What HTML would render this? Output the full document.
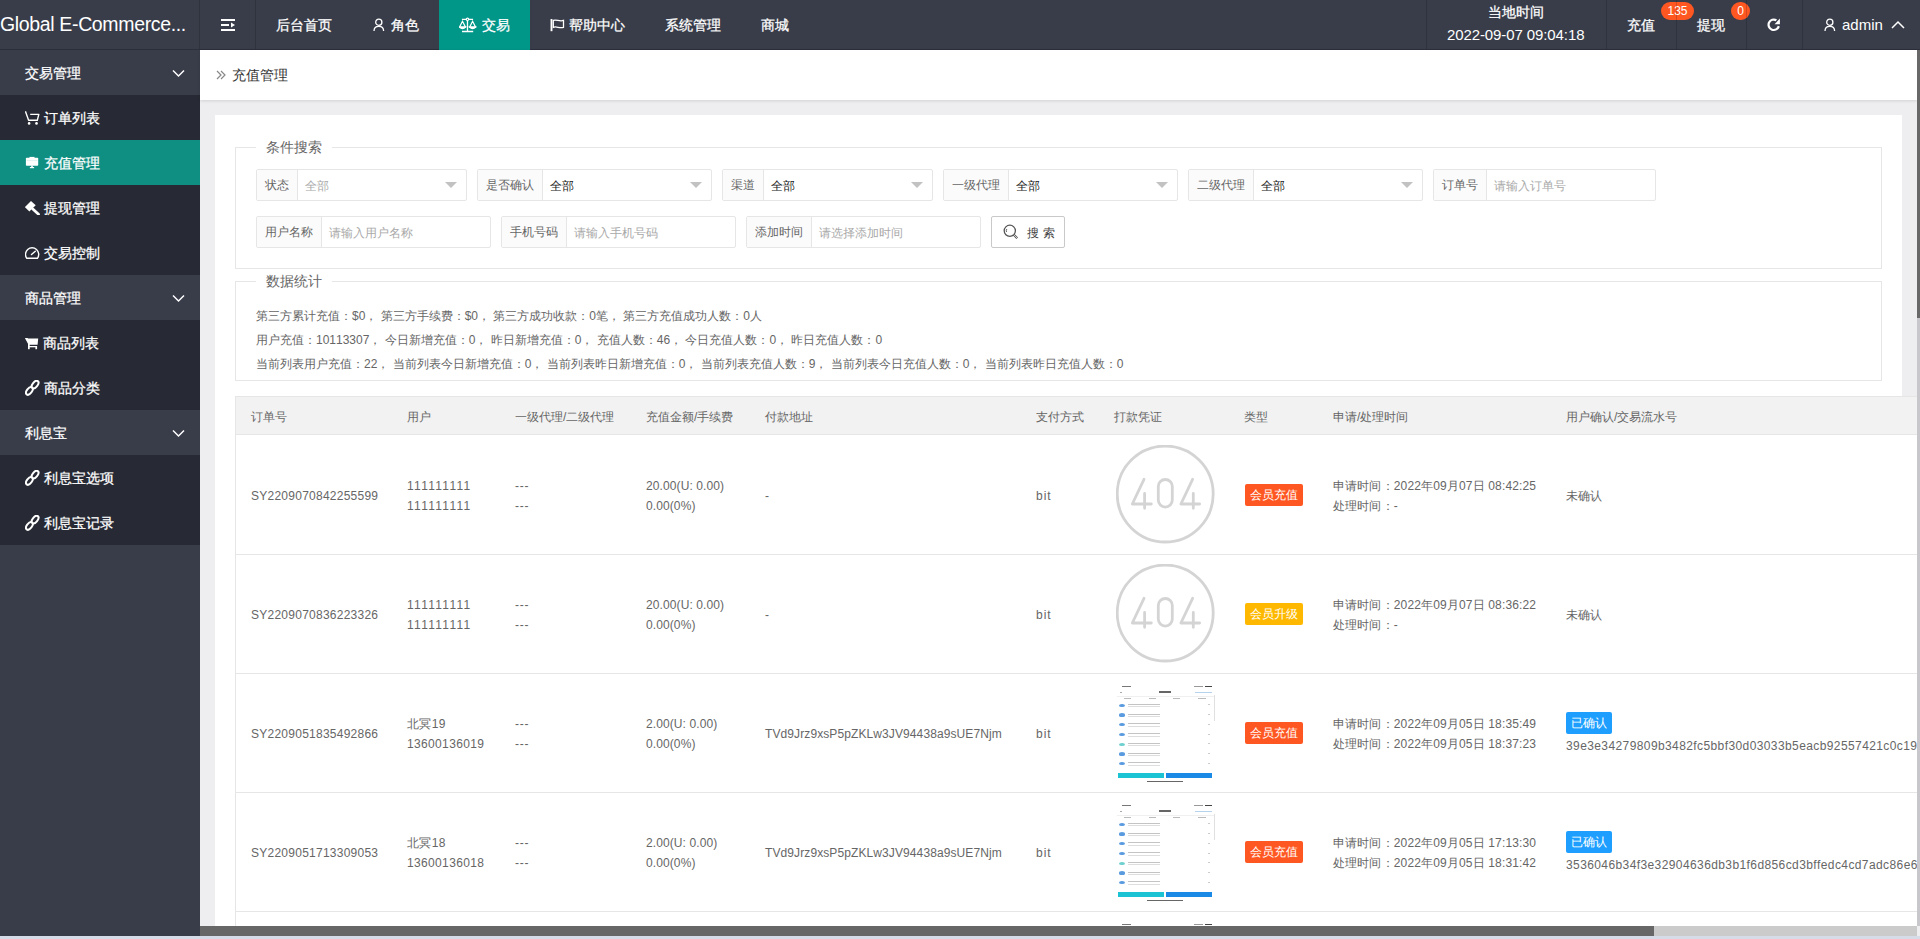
<!DOCTYPE html>
<html><head><meta charset="utf-8">
<style>
*{box-sizing:border-box;margin:0;padding:0}
html,body{width:1920px;height:939px;overflow:hidden;background:#eeedf0;font-kerning:none;font-family:"Liberation Sans",sans-serif;color:#666}
.abs{position:absolute}
#hdr{position:absolute;left:0;top:0;width:1920px;height:50px;background:#393d4a;border-bottom:1px solid #2c2f3a}
.ht{position:absolute;color:#fff;font-size:14px;line-height:16px;white-space:nowrap;-webkit-text-stroke:0.25px #fff}
.vsep{position:absolute;top:0;width:1px;height:49px;background:rgba(0,0,0,0.16)}
#side{position:absolute;left:0;top:50px;width:200px;height:889px;background:#393d4a}
.grp{position:absolute;left:0;width:200px;height:45px;background:#393d4a;color:#fff;font-size:14px}
.itm{position:absolute;left:0;width:200px;height:45px;background:#272a34;color:#fff;font-size:14px}
.itm.on{background:#0f8f82}
.grp span,.itm span{position:absolute;top:15px;line-height:16px;white-space:nowrap;-webkit-text-stroke:0.25px #fff}
.chev{position:absolute;left:172px;top:19px}
.ico{position:absolute;left:25px;top:15px}
#crumb{position:absolute;left:200px;top:50px;width:1717px;height:50px;background:#fff;box-shadow:0 1px 3px rgba(0,0,0,.12)}
#card{position:absolute;left:215px;top:115px;width:1687px;height:830px;background:#fff}
.fs{position:absolute;left:235px;width:1647px;border:1px solid #e6e6e6}
.lg{position:absolute;left:256px;background:#fff;padding:0 10px;font-size:14px;line-height:16px;color:#666}
.box{position:absolute;height:32px;border:1px solid #e6e6e6;background:#fff;border-radius:2px}
.box .lb{position:absolute;left:0;top:0;height:30px;background:#fbfbfb;border-right:1px solid #e6e6e6;font-size:12px;line-height:30px;padding:0 8px;color:#666;white-space:nowrap}
.box .v{position:absolute;top:1px;line-height:30px;font-size:12px;white-space:nowrap}
.box .ph{color:#a9a9a9}
.box .val{color:#222}
.box .arr{position:absolute;top:12px;width:0;height:0;border-left:6px solid transparent;border-right:6px solid transparent;border-top:6px solid #c2c2c2}
.stat{position:absolute;left:256px;font-size:12px;line-height:24px;color:#666;white-space:nowrap}
#tbl{position:absolute;left:235px;top:396px;width:1682px;height:530px;border-left:1px solid #e6e6e6;overflow:hidden;background:#fff}
.th{position:absolute;left:0;top:0;width:1700px;height:39px;background:#f2f2f2;border-top:1px solid #e6e6e6;border-bottom:1px solid #e6e6e6}
.c{position:absolute;font-size:12px;line-height:20px;color:#666;white-space:nowrap}
.rowb{position:absolute;left:0;width:1700px;height:1px;background:#e6e6e6}
.tag{position:absolute;height:22px;line-height:22px;font-size:12px;color:#fff;text-align:center;border-radius:2px}
.c404{position:absolute;width:100px;height:100px}
.c404 b{position:absolute;left:0;top:0;width:94px;height:94px;text-align:center;line-height:94px;font-weight:normal;font-size:44px;color:#d2d2d2;letter-spacing:1px}
#hs{position:absolute;left:200px;top:926px;width:1717px;height:10px;background:#cbcbcb}
#hs i{position:absolute;left:0;top:0;width:1454px;height:10px;background:#676767}
#vs{position:absolute;left:1917px;top:50px;width:3px;height:876px;background:#c8c8cc}
#vs i{position:absolute;left:0;top:0;width:3px;height:268px;background:#686868}
.shot{position:absolute;width:98px;height:99px;background:#fff}
.shot i{position:absolute;display:block}
#task{position:absolute;left:0;top:936px;width:1920px;height:3px;background:#d6dde9}
</style></head><body>

<div id="hdr">
  <div class="ht" style="left:0;top:11.5px;font-size:19.5px;line-height:24px;letter-spacing:-0.35px;-webkit-text-stroke:0">Global E-Commerce...</div>
  <div class="vsep" style="left:199px"></div>
  <svg class="abs" style="left:221px;top:19px" width="15" height="12" viewBox="0 0 15 12"><rect x="0" y="0" width="14" height="2" fill="#fff"/><rect x="0" y="5" width="8" height="2" fill="#fff"/><path d="M10 3.5 L14 6 L10 8.5Z" fill="#fff"/><rect x="0" y="10" width="14" height="2" fill="#fff"/></svg>
  <div class="vsep" style="left:255px"></div>
  <div class="ht" style="left:276px;top:17px">后台首页</div>
  <svg class="abs" style="left:373px;top:18px" width="13" height="14" viewBox="0 0 13 14" fill="none" stroke="#fff" stroke-width="1.3"><circle cx="5.8" cy="4.2" r="3.1"/><path d="M1 13 C1 10 3.2 8.4 5.8 8.4 C8.4 8.4 10.6 10 10.6 13"/></svg>
  <div class="ht" style="left:391px;top:17px">角色</div>
  <div class="abs" style="left:439px;top:0;width:91px;height:50px;background:#009688"></div>
  <svg class="abs" style="left:459px;top:17px" width="18" height="16" viewBox="0 0 18 16" fill="none" stroke="#fff" stroke-width="1.2"><path d="M2.9 2.3 H14.1 M8.5 2.3 V14.5 M3 14.5 H14.2" stroke-width="1.3"/><circle cx="8.5" cy="2.3" r="1.2" fill="#009688"/><path d="M3.5 4.3 L0.6 10 H6.4 Z M13.6 4.3 L10.7 10 H16.5 Z"/><path d="M0.4 10 Q3.5 13.2 6.6 10 Z M10.5 10 Q13.6 13.2 16.7 10 Z" fill="#fff"/></svg>
  <div class="ht" style="left:482px;top:17px">交易</div>
  <svg class="abs" style="left:550px;top:18px" width="15" height="14" viewBox="0 0 15 14" fill="none" stroke="#fff" stroke-width="1.3"><path d="M1.5 1 V13.2" stroke-width="1.9"/><path d="M3.3 2.4 C6.5 1 9.5 4 13.5 2.4 V9.3 C9.5 10.8 6.5 7.8 3.3 9.3 Z"/></svg>
  <div class="ht" style="left:569px;top:17px">帮助中心</div>
  <div class="ht" style="left:665px;top:17px">系统管理</div>
  <div class="ht" style="left:761px;top:17px">商城</div>

  <div class="vsep" style="left:1426px"></div>
  <div class="ht" style="left:1488px;top:4px">当地时间</div>
  <div class="ht" style="left:1447px;top:26px;font-size:15px;line-height:18px;letter-spacing:-0.1px;-webkit-text-stroke:0">2022-09-07 09:04:18</div>
  <div class="vsep" style="left:1606px"></div>
  <div class="ht" style="left:1627px;top:17px">充值</div>
  <div class="abs" style="left:1661px;top:2px;width:33px;height:18px;border-radius:9px;background:#ff5722;color:#fff;font-size:12px;line-height:18px;text-align:center">135</div>
  <div class="vsep" style="left:1676px"></div>
  <div class="ht" style="left:1697px;top:17px">提现</div>
  <div class="abs" style="left:1731px;top:2px;width:19px;height:18px;border-radius:9px;background:#ff5722;color:#fff;font-size:12px;line-height:18px;text-align:center">0</div>
  <div class="vsep" style="left:1746px"></div>
  <svg class="abs" style="left:1767px;top:18px" width="15" height="15" viewBox="0 0 15 15"><path d="M11.8 8.1 A5.2 5.2 0 1 1 9.4 2.3" fill="none" stroke="#fff" stroke-width="2.2"/><path d="M12.9 0.6 V6.2 H7.6 Z" fill="#fff"/></svg>
  <div class="vsep" style="left:1802px"></div>
  <svg class="abs" style="left:1824px;top:18px" width="13" height="14" viewBox="0 0 13 14" fill="none" stroke="#fff" stroke-width="1.3"><circle cx="5.8" cy="4.2" r="3.1"/><path d="M1 13 C1 10 3.2 8.4 5.8 8.4 C8.4 8.4 10.6 10 10.6 13"/></svg>
  <div class="ht" style="left:1842px;top:16px;font-size:15px;line-height:18px;-webkit-text-stroke:0">admin</div>
  <svg class="abs" style="left:1891px;top:20px" width="14" height="9" viewBox="0 0 14 9" fill="none" stroke="#fff" stroke-width="1.5"><path d="M1 8 L7 2 L13 8"/></svg>
</div>

<div id="side">
  <div class="grp" style="top:0"><span style="left:25px">交易管理</span><svg class="chev" width="13" height="9" viewBox="0 0 13 9" fill="none" stroke="#fff" stroke-width="1.5"><path d="M1 1.5 L6.5 7 L12 1.5"/></svg></div>
  <div class="itm" style="top:45px"><svg class="ico" style="top:16px" width="16" height="15" viewBox="0 0 16 15" fill="none" stroke="#fff" stroke-width="1.4" stroke-linejoin="round"><path d="M0.4 0.3 L3.6 9.3 H12.3 L13.8 3.4 H5.2"/><circle cx="4.1" cy="12.4" r="1.3" fill="#fff" stroke="none"/><circle cx="11.5" cy="12.4" r="1.3" fill="#fff" stroke="none"/></svg><span style="left:44px">订单列表</span></div>
  <div class="itm on" style="top:90px"><svg class="ico" style="top:16px" width="14" height="13" viewBox="0 0 14 13"><rect x="0.9" y="1.8" width="12.3" height="8" rx="0.8" fill="#fff"/><rect x="4.5" y="0.9" width="5" height="1.2" fill="#fff"/><rect x="1.5" y="4" width="11" height="0.6" fill="#cfe9e6"/><rect x="6.2" y="9.6" width="1.6" height="1.6" fill="#fff"/><rect x="4.9" y="11" width="4.2" height="1.2" fill="#fff"/></svg><span style="left:44px">充值管理</span></div>
  <div class="itm" style="top:135px"><svg class="ico" style="top:15px" width="15" height="15" viewBox="0 0 15 15" fill="#fff"><path d="M-0.2 7.1 L6 0.9 L10.7 5.2 L4.4 11.5Z"/><path d="M7.8 9 L13.5 14.2" stroke="#fff" stroke-width="2.8" stroke-linecap="round"/></svg><span style="left:44px">提现管理</span></div>
  <div class="itm" style="top:180px"><svg class="ico" style="top:16px" width="15" height="14" viewBox="0 0 15 14" fill="none" stroke="#fff" stroke-width="1.4"><path d="M1.7 12.2 A6.6 6.6 0 1 1 12.5 12.2 Z"/><path d="M6.5 8.5 L10.3 5.3" stroke-width="1.5" stroke-linecap="round"/></svg><span style="left:44px">交易控制</span></div>
  <div class="grp" style="top:225px"><span style="left:25px">商品管理</span><svg class="chev" width="13" height="9" viewBox="0 0 13 9" fill="none" stroke="#fff" stroke-width="1.5"><path d="M1 1.5 L6.5 7 L12 1.5"/></svg></div>
  <div class="itm" style="top:270px"><svg class="ico" style="top:16px" width="15" height="14" viewBox="0 0 15 14" fill="#fff"><path d="M-0.2 2 H2.6 L3 2.6 H13.2 L12.6 8.7 H3.5 Z"/><rect x="3" y="8" width="1.7" height="5.2"/><rect x="3" y="10" width="9" height="1.3"/><rect x="10.4" y="10" width="1.7" height="3.2"/></svg><span style="left:43px">商品列表</span></div>
  <div class="itm" style="top:315px"><svg class="ico" width="15" height="16" viewBox="0 0 15 16" fill="none" stroke="#fff" stroke-width="2"><ellipse cx="10.1" cy="4.6" rx="4.4" ry="2.5" transform="rotate(-52 10.1 4.6)"/><ellipse cx="4.4" cy="10.9" rx="4.4" ry="2.5" transform="rotate(-52 4.4 10.9)"/></svg><span style="left:44px">商品分类</span></div>
  <div class="grp" style="top:360px"><span style="left:25px">利息宝</span><svg class="chev" width="13" height="9" viewBox="0 0 13 9" fill="none" stroke="#fff" stroke-width="1.5"><path d="M1 1.5 L6.5 7 L12 1.5"/></svg></div>
  <div class="itm" style="top:405px"><svg class="ico" width="15" height="16" viewBox="0 0 15 16" fill="none" stroke="#fff" stroke-width="2"><ellipse cx="10.1" cy="4.6" rx="4.4" ry="2.5" transform="rotate(-52 10.1 4.6)"/><ellipse cx="4.4" cy="10.9" rx="4.4" ry="2.5" transform="rotate(-52 4.4 10.9)"/></svg><span style="left:44px">利息宝选项</span></div>
  <div class="itm" style="top:450px"><svg class="ico" width="15" height="16" viewBox="0 0 15 16" fill="none" stroke="#fff" stroke-width="2"><ellipse cx="10.1" cy="4.6" rx="4.4" ry="2.5" transform="rotate(-52 10.1 4.6)"/><ellipse cx="4.4" cy="10.9" rx="4.4" ry="2.5" transform="rotate(-52 4.4 10.9)"/></svg><span style="left:44px">利息宝记录</span></div>
</div>
<div id="crumb"><svg class="abs" style="left:16px;top:20px" width="10" height="10" viewBox="0 0 10 10" fill="none" stroke="#888" stroke-width="1.2"><path d="M1 1 L5 5 L1 9 M5 1 L9 5 L5 9"/></svg><div class="abs" style="left:32px;top:17px;font-size:14px;line-height:16px;color:#333">充值管理</div></div>
<div id="card"></div>
<div class="fs" style="top:147px;height:122px"></div>
<div class="lg" style="top:139px">条件搜索</div>
<div class="box" style="left:256px;top:169px;width:211px"><div class="lb" style="width:41px">状态</div><div class="v ph" style="left:48px">全部</div><i class="arr" style="left:188px"></i></div><div class="box" style="left:477px;top:169px;width:235px"><div class="lb" style="width:65px">是否确认</div><div class="v val" style="left:72px">全部</div><i class="arr" style="left:212px"></i></div><div class="box" style="left:722px;top:169px;width:211px"><div class="lb" style="width:41px">渠道</div><div class="v val" style="left:48px">全部</div><i class="arr" style="left:188px"></i></div><div class="box" style="left:943px;top:169px;width:235px"><div class="lb" style="width:65px">一级代理</div><div class="v val" style="left:72px">全部</div><i class="arr" style="left:212px"></i></div><div class="box" style="left:1188px;top:169px;width:235px"><div class="lb" style="width:65px">二级代理</div><div class="v val" style="left:72px">全部</div><i class="arr" style="left:212px"></i></div><div class="box" style="left:1433px;top:169px;width:223px"><div class="lb" style="width:53px">订单号</div><div class="v ph" style="left:60px">请输入订单号</div></div><div class="box" style="left:256px;top:216px;width:235px"><div class="lb" style="width:65px">用户名称</div><div class="v ph" style="left:72px">请输入用户名称</div></div><div class="box" style="left:501px;top:216px;width:235px"><div class="lb" style="width:65px">手机号码</div><div class="v ph" style="left:72px">请输入手机号码</div></div><div class="box" style="left:746px;top:216px;width:235px"><div class="lb" style="width:65px">添加时间</div><div class="v ph" style="left:72px">请选择添加时间</div></div><div class="box" style="left:991px;top:216px;width:74px;border-color:#c9c9c9"><svg class="abs" style="left:11px;top:7px" width="16" height="16" viewBox="0 0 16 16" fill="none" stroke="#555" stroke-width="1.3"><circle cx="6.8" cy="6.8" r="5.6"/><path d="M10.8 10.8 L14.2 14.2" stroke-width="2.2"/><path d="M10.8 10.8 L14.2 14.2" stroke="#fff" stroke-width="0.7"/><path d="M3.5 8 A3.5 3.5 0 0 1 3.8 5" stroke-width="0.9"/></svg><div class="v" style="left:35px;color:#444;letter-spacing:4px">搜索</div></div>
<div class="fs" style="top:281px;height:100px"></div>
<div class="lg" style="top:273px">数据统计</div>
<div class="stat" style="top:304px">第三方累计充值：$0， 第三方手续费：$0， 第三方成功收款：0笔， 第三方充值成功人数：0人</div>
<div class="stat" style="top:328px">用户充值：10113307， 今日新增充值：0， 昨日新增充值：0， 充值人数：46， 今日充值人数：0， 昨日充值人数：0</div>
<div class="stat" style="top:352px">当前列表用户充值：22， 当前列表今日新增充值：0， 当前列表昨日新增充值：0， 当前列表充值人数：9， 当前列表今日充值人数：0， 当前列表昨日充值人数：0</div>
<div id="tbl"><div class="th"></div><div class="c" style="left:15px;top:11px;">订单号</div><div class="c" style="left:171px;top:11px;">用户</div><div class="c" style="left:279px;top:11px;">一级代理/二级代理</div><div class="c" style="left:410px;top:11px;">充值金额/手续费</div><div class="c" style="left:529px;top:11px;">付款地址</div><div class="c" style="left:800px;top:11px;">支付方式</div><div class="c" style="left:878px;top:11px;">打款凭证</div><div class="c" style="left:1008px;top:11px;">类型</div><div class="c" style="left:1097px;top:11px;">申请/处理时间</div><div class="c" style="left:1330px;top:11px;">用户确认/交易流水号</div><div class="rowb" style="top:158px"></div><div class="c" style="left:15px;top:90px;letter-spacing:0.25px">SY2209070842255599</div><div class="c" style="left:171px;top:80px;letter-spacing:0.4px">111111111<br>111111111</div><div class="c" style="left:279px;top:80px;letter-spacing:0.7px">---<br>---</div><div class="c" style="left:410px;top:80px;letter-spacing:0.1px">20.00(U: 0.00)<br>0.00(0%)</div><div class="c" style="left:529px;top:90px;">-</div><div class="c" style="left:800px;top:90px;letter-spacing:1px">bit</div><div class="c404" style="left:880px;top:49px"><svg width="100" height="100" viewBox="0 0 100 100" fill="none" stroke="#d4d4d4" stroke-width="2.8" stroke-linecap="round" stroke-linejoin="round"><circle cx="49.2" cy="49" r="48"/><path d="M28 34.3 L16.3 59 H35.3 M28.6 48.5 V63.3"/><rect x="42.3" y="34.5" width="14" height="27.6" rx="7"/><path d="M76.6 34.3 L64.9 59 H83.6 M77.3 48.5 V63.3"/></svg></div><div class="tag" style="left:1009px;top:88px;width:58px;background:#ff5722">会员充值</div><div class="c" style="left:1097px;top:80px;letter-spacing:0.15px">申请时间：2022年09月07日 08:42:25<br>处理时间：-</div><div class="c" style="left:1330px;top:90px;">未确认</div><div class="rowb" style="top:277px"></div><div class="c" style="left:15px;top:209px;letter-spacing:0.25px">SY2209070836223326</div><div class="c" style="left:171px;top:199px;letter-spacing:0.4px">111111111<br>111111111</div><div class="c" style="left:279px;top:199px;letter-spacing:0.7px">---<br>---</div><div class="c" style="left:410px;top:199px;letter-spacing:0.1px">20.00(U: 0.00)<br>0.00(0%)</div><div class="c" style="left:529px;top:209px;">-</div><div class="c" style="left:800px;top:209px;letter-spacing:1px">bit</div><div class="c404" style="left:880px;top:168px"><svg width="100" height="100" viewBox="0 0 100 100" fill="none" stroke="#d4d4d4" stroke-width="2.8" stroke-linecap="round" stroke-linejoin="round"><circle cx="49.2" cy="49" r="48"/><path d="M28 34.3 L16.3 59 H35.3 M28.6 48.5 V63.3"/><rect x="42.3" y="34.5" width="14" height="27.6" rx="7"/><path d="M76.6 34.3 L64.9 59 H83.6 M77.3 48.5 V63.3"/></svg></div><div class="tag" style="left:1009px;top:207px;width:58px;background:#ffb800">会员升级</div><div class="c" style="left:1097px;top:199px;letter-spacing:0.15px">申请时间：2022年09月07日 08:36:22<br>处理时间：-</div><div class="c" style="left:1330px;top:209px;">未确认</div><div class="rowb" style="top:396px"></div><div class="c" style="left:15px;top:328px;letter-spacing:0.25px">SY2209051835492866</div><div class="c" style="left:171px;top:318px;letter-spacing:0.35px">北冥19<br>13600136019</div><div class="c" style="left:279px;top:318px;letter-spacing:0.7px">---<br>---</div><div class="c" style="left:410px;top:318px;letter-spacing:0.1px">2.00(U: 0.00)<br>0.00(0%)</div><div class="c" style="left:529px;top:328px;letter-spacing:0.1px">TVd9Jrz9xsP5pZKLw3JV94438a9sUE7Njm</div><div class="c" style="left:800px;top:328px;letter-spacing:1px">bit</div><div class="shot" style="left:881px;top:288px"><i style="left:5px;top:1.5px;width:9px;height:1.5px;background:#777"></i><i style="left:77px;top:1.8px;width:9px;height:1.2px;background:#999"></i><i style="left:88px;top:1.5px;width:7px;height:1.8px;background:#444"></i><i style="left:2.5px;top:7.5px;width:2px;height:1.2px;background:#aaa"></i><i style="left:42px;top:7px;width:12px;height:1.6px;background:#666"></i><i style="left:78px;top:7.5px;width:17px;height:1.2px;background:#b5d3ef"></i><i style="left:0px;top:11.5px;width:97px;height:0.6px;background:#f0f0f0"></i><i style="left:7px;top:13.5px;width:7px;height:1.2px;background:#bbb"></i><i style="left:31.7px;top:13.5px;width:7.0000000000000036px;height:1.2px;background:#bbb"></i><i style="left:56.3px;top:13.5px;width:6.400000000000006px;height:1.2px;background:#bbb"></i><i style="left:81.4px;top:13.5px;width:7.599999999999994px;height:1.2px;background:#bbb"></i><i style="left:96.5px;top:11px;width:1.2px;height:26px;background:#e0e0e0"></i><i style="left:1.8px;top:19.599999999999998px;width:6.4px;height:3.4px;background:#5a9be0;border-radius:50%"></i><i style="left:10.6px;top:19.8px;width:32px;height:1px;background:#c4c4c4"></i><i style="left:10.6px;top:22.4px;width:32px;height:0.9px;background:#dedede"></i><i style="left:91px;top:20.4px;width:2px;height:1px;background:#ccc"></i><i style="left:1.8px;top:29.299999999999997px;width:6.4px;height:3.4px;background:#5a9be0;border-radius:50%"></i><i style="left:10.6px;top:29.5px;width:32px;height:1px;background:#c4c4c4"></i><i style="left:10.6px;top:32.1px;width:32px;height:0.9px;background:#dedede"></i><i style="left:91px;top:30.099999999999998px;width:2px;height:1px;background:#ccc"></i><i style="left:1.8px;top:39.0px;width:6.4px;height:3.4px;background:#5a9be0;border-radius:50%"></i><i style="left:10.6px;top:39.2px;width:32px;height:1px;background:#c4c4c4"></i><i style="left:10.6px;top:41.800000000000004px;width:32px;height:0.9px;background:#dedede"></i><i style="left:91px;top:39.800000000000004px;width:2px;height:1px;background:#ccc"></i><i style="left:1.8px;top:48.9px;width:6.4px;height:3.4px;background:#5a9be0;border-radius:50%"></i><i style="left:10.6px;top:49.1px;width:32px;height:1px;background:#c4c4c4"></i><i style="left:10.6px;top:51.7px;width:32px;height:0.9px;background:#dedede"></i><i style="left:91px;top:49.7px;width:2px;height:1px;background:#ccc"></i><i style="left:1.8px;top:58.6px;width:6.4px;height:3.4px;background:#6fd0d0;border-radius:50%"></i><i style="left:10.6px;top:58.800000000000004px;width:32px;height:1px;background:#c4c4c4"></i><i style="left:10.6px;top:61.400000000000006px;width:32px;height:0.9px;background:#dedede"></i><i style="left:91px;top:59.400000000000006px;width:2px;height:1px;background:#ccc"></i><i style="left:1.8px;top:68.30000000000001px;width:6.4px;height:3.4px;background:#5a9be0;border-radius:50%"></i><i style="left:10.6px;top:68.5px;width:32px;height:1px;background:#c4c4c4"></i><i style="left:10.6px;top:71.10000000000001px;width:32px;height:0.9px;background:#dedede"></i><i style="left:91px;top:69.10000000000001px;width:2px;height:1px;background:#ccc"></i><i style="left:1.8px;top:77.9px;width:6.4px;height:3.4px;background:#5a9be0;border-radius:50%"></i><i style="left:10.6px;top:78.1px;width:32px;height:1px;background:#c4c4c4"></i><i style="left:10.6px;top:80.7px;width:32px;height:0.9px;background:#dedede"></i><i style="left:91px;top:78.7px;width:2px;height:1px;background:#ccc"></i><i style="left:0.6px;top:88.9px;width:46.3px;height:5.3px;background:#1cc3d3"></i><i style="left:48.6px;top:88.9px;width:46.3px;height:5.3px;background:#1a8ae6"></i><i style="left:30px;top:97px;width:36px;height:1.3px;background:#666"></i></div><div class="tag" style="left:1009px;top:326px;width:58px;background:#ff5722">会员充值</div><div class="c" style="left:1097px;top:318px;letter-spacing:0.15px">申请时间：2022年09月05日 18:35:49<br>处理时间：2022年09月05日 18:37:23</div><div class="tag" style="left:1330px;top:316px;width:46px;background:#1e9fff">已确认</div><div class="c" style="left:1330px;top:340px;letter-spacing:0.4px">39e3e34279809b3482fc5bbf30d03033b5eacb92557421c0c19a8</div><div class="rowb" style="top:515px"></div><div class="c" style="left:15px;top:447px;letter-spacing:0.25px">SY2209051713309053</div><div class="c" style="left:171px;top:437px;letter-spacing:0.35px">北冥18<br>13600136018</div><div class="c" style="left:279px;top:437px;letter-spacing:0.7px">---<br>---</div><div class="c" style="left:410px;top:437px;letter-spacing:0.1px">2.00(U: 0.00)<br>0.00(0%)</div><div class="c" style="left:529px;top:447px;letter-spacing:0.1px">TVd9Jrz9xsP5pZKLw3JV94438a9sUE7Njm</div><div class="c" style="left:800px;top:447px;letter-spacing:1px">bit</div><div class="shot" style="left:881px;top:407px"><i style="left:5px;top:1.5px;width:9px;height:1.5px;background:#777"></i><i style="left:77px;top:1.8px;width:9px;height:1.2px;background:#999"></i><i style="left:88px;top:1.5px;width:7px;height:1.8px;background:#444"></i><i style="left:2.5px;top:7.5px;width:2px;height:1.2px;background:#aaa"></i><i style="left:42px;top:7px;width:12px;height:1.6px;background:#666"></i><i style="left:78px;top:7.5px;width:17px;height:1.2px;background:#b5d3ef"></i><i style="left:0px;top:11.5px;width:97px;height:0.6px;background:#f0f0f0"></i><i style="left:7px;top:13.5px;width:7px;height:1.2px;background:#bbb"></i><i style="left:31.7px;top:13.5px;width:7.0000000000000036px;height:1.2px;background:#bbb"></i><i style="left:56.3px;top:13.5px;width:6.400000000000006px;height:1.2px;background:#bbb"></i><i style="left:81.4px;top:13.5px;width:7.599999999999994px;height:1.2px;background:#bbb"></i><i style="left:96.5px;top:11px;width:1.2px;height:26px;background:#e0e0e0"></i><i style="left:1.8px;top:19.599999999999998px;width:6.4px;height:3.4px;background:#5a9be0;border-radius:50%"></i><i style="left:10.6px;top:19.8px;width:32px;height:1px;background:#c4c4c4"></i><i style="left:10.6px;top:22.4px;width:32px;height:0.9px;background:#dedede"></i><i style="left:91px;top:20.4px;width:2px;height:1px;background:#ccc"></i><i style="left:1.8px;top:29.299999999999997px;width:6.4px;height:3.4px;background:#5a9be0;border-radius:50%"></i><i style="left:10.6px;top:29.5px;width:32px;height:1px;background:#c4c4c4"></i><i style="left:10.6px;top:32.1px;width:32px;height:0.9px;background:#dedede"></i><i style="left:91px;top:30.099999999999998px;width:2px;height:1px;background:#ccc"></i><i style="left:1.8px;top:39.0px;width:6.4px;height:3.4px;background:#5a9be0;border-radius:50%"></i><i style="left:10.6px;top:39.2px;width:32px;height:1px;background:#c4c4c4"></i><i style="left:10.6px;top:41.800000000000004px;width:32px;height:0.9px;background:#dedede"></i><i style="left:91px;top:39.800000000000004px;width:2px;height:1px;background:#ccc"></i><i style="left:1.8px;top:48.9px;width:6.4px;height:3.4px;background:#5a9be0;border-radius:50%"></i><i style="left:10.6px;top:49.1px;width:32px;height:1px;background:#c4c4c4"></i><i style="left:10.6px;top:51.7px;width:32px;height:0.9px;background:#dedede"></i><i style="left:91px;top:49.7px;width:2px;height:1px;background:#ccc"></i><i style="left:1.8px;top:58.6px;width:6.4px;height:3.4px;background:#6fd0d0;border-radius:50%"></i><i style="left:10.6px;top:58.800000000000004px;width:32px;height:1px;background:#c4c4c4"></i><i style="left:10.6px;top:61.400000000000006px;width:32px;height:0.9px;background:#dedede"></i><i style="left:91px;top:59.400000000000006px;width:2px;height:1px;background:#ccc"></i><i style="left:1.8px;top:68.30000000000001px;width:6.4px;height:3.4px;background:#5a9be0;border-radius:50%"></i><i style="left:10.6px;top:68.5px;width:32px;height:1px;background:#c4c4c4"></i><i style="left:10.6px;top:71.10000000000001px;width:32px;height:0.9px;background:#dedede"></i><i style="left:91px;top:69.10000000000001px;width:2px;height:1px;background:#ccc"></i><i style="left:1.8px;top:77.9px;width:6.4px;height:3.4px;background:#5a9be0;border-radius:50%"></i><i style="left:10.6px;top:78.1px;width:32px;height:1px;background:#c4c4c4"></i><i style="left:10.6px;top:80.7px;width:32px;height:0.9px;background:#dedede"></i><i style="left:91px;top:78.7px;width:2px;height:1px;background:#ccc"></i><i style="left:0.6px;top:88.9px;width:46.3px;height:5.3px;background:#1cc3d3"></i><i style="left:48.6px;top:88.9px;width:46.3px;height:5.3px;background:#1a8ae6"></i><i style="left:30px;top:97px;width:36px;height:1.3px;background:#666"></i></div><div class="tag" style="left:1009px;top:445px;width:58px;background:#ff5722">会员充值</div><div class="c" style="left:1097px;top:437px;letter-spacing:0.15px">申请时间：2022年09月05日 17:13:30<br>处理时间：2022年09月05日 18:31:42</div><div class="tag" style="left:1330px;top:435px;width:46px;background:#1e9fff">已确认</div><div class="c" style="left:1330px;top:459px;letter-spacing:0.4px">3536046b34f3e32904636db3b1f6d856cd3bffedc4cd7adc86e6f1</div><div class="shot" style="left:881px;top:526px"><i style="left:5px;top:1.5px;width:9px;height:1.5px;background:#777"></i><i style="left:77px;top:1.8px;width:9px;height:1.2px;background:#999"></i><i style="left:88px;top:1.5px;width:7px;height:1.8px;background:#444"></i><i style="left:2.5px;top:7.5px;width:2px;height:1.2px;background:#aaa"></i><i style="left:42px;top:7px;width:12px;height:1.6px;background:#666"></i><i style="left:78px;top:7.5px;width:17px;height:1.2px;background:#b5d3ef"></i><i style="left:0px;top:11.5px;width:97px;height:0.6px;background:#f0f0f0"></i><i style="left:7px;top:13.5px;width:7px;height:1.2px;background:#bbb"></i><i style="left:31.7px;top:13.5px;width:7.0000000000000036px;height:1.2px;background:#bbb"></i><i style="left:56.3px;top:13.5px;width:6.400000000000006px;height:1.2px;background:#bbb"></i><i style="left:81.4px;top:13.5px;width:7.599999999999994px;height:1.2px;background:#bbb"></i><i style="left:96.5px;top:11px;width:1.2px;height:26px;background:#e0e0e0"></i><i style="left:1.8px;top:19.599999999999998px;width:6.4px;height:3.4px;background:#5a9be0;border-radius:50%"></i><i style="left:10.6px;top:19.8px;width:32px;height:1px;background:#c4c4c4"></i><i style="left:10.6px;top:22.4px;width:32px;height:0.9px;background:#dedede"></i><i style="left:91px;top:20.4px;width:2px;height:1px;background:#ccc"></i><i style="left:1.8px;top:29.299999999999997px;width:6.4px;height:3.4px;background:#5a9be0;border-radius:50%"></i><i style="left:10.6px;top:29.5px;width:32px;height:1px;background:#c4c4c4"></i><i style="left:10.6px;top:32.1px;width:32px;height:0.9px;background:#dedede"></i><i style="left:91px;top:30.099999999999998px;width:2px;height:1px;background:#ccc"></i><i style="left:1.8px;top:39.0px;width:6.4px;height:3.4px;background:#5a9be0;border-radius:50%"></i><i style="left:10.6px;top:39.2px;width:32px;height:1px;background:#c4c4c4"></i><i style="left:10.6px;top:41.800000000000004px;width:32px;height:0.9px;background:#dedede"></i><i style="left:91px;top:39.800000000000004px;width:2px;height:1px;background:#ccc"></i><i style="left:1.8px;top:48.9px;width:6.4px;height:3.4px;background:#5a9be0;border-radius:50%"></i><i style="left:10.6px;top:49.1px;width:32px;height:1px;background:#c4c4c4"></i><i style="left:10.6px;top:51.7px;width:32px;height:0.9px;background:#dedede"></i><i style="left:91px;top:49.7px;width:2px;height:1px;background:#ccc"></i><i style="left:1.8px;top:58.6px;width:6.4px;height:3.4px;background:#6fd0d0;border-radius:50%"></i><i style="left:10.6px;top:58.800000000000004px;width:32px;height:1px;background:#c4c4c4"></i><i style="left:10.6px;top:61.400000000000006px;width:32px;height:0.9px;background:#dedede"></i><i style="left:91px;top:59.400000000000006px;width:2px;height:1px;background:#ccc"></i><i style="left:1.8px;top:68.30000000000001px;width:6.4px;height:3.4px;background:#5a9be0;border-radius:50%"></i><i style="left:10.6px;top:68.5px;width:32px;height:1px;background:#c4c4c4"></i><i style="left:10.6px;top:71.10000000000001px;width:32px;height:0.9px;background:#dedede"></i><i style="left:91px;top:69.10000000000001px;width:2px;height:1px;background:#ccc"></i><i style="left:1.8px;top:77.9px;width:6.4px;height:3.4px;background:#5a9be0;border-radius:50%"></i><i style="left:10.6px;top:78.1px;width:32px;height:1px;background:#c4c4c4"></i><i style="left:10.6px;top:80.7px;width:32px;height:0.9px;background:#dedede"></i><i style="left:91px;top:78.7px;width:2px;height:1px;background:#ccc"></i><i style="left:0.6px;top:88.9px;width:46.3px;height:5.3px;background:#1cc3d3"></i><i style="left:48.6px;top:88.9px;width:46.3px;height:5.3px;background:#1a8ae6"></i><i style="left:30px;top:97px;width:36px;height:1.3px;background:#666"></i></div></div>
<div id="hs"><i></i></div>
<div id="vs"><i></i></div>
<div id="task"></div>
</body></html>
